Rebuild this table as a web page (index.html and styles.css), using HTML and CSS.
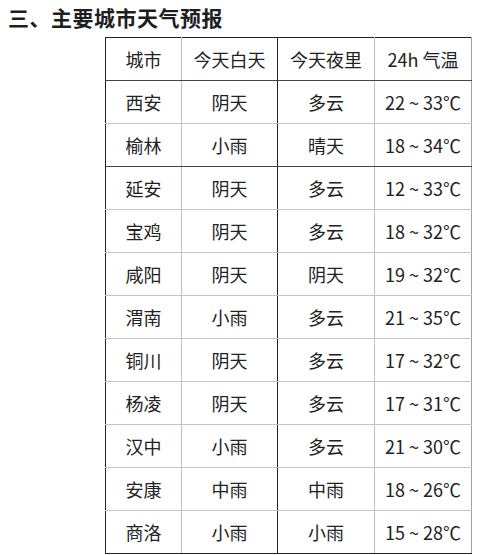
FILE: index.html
```html
<!DOCTYPE html>
<html lang="zh">
<head>
<meta charset="utf-8">
<link rel="stylesheet" href="styles.css">
</head>
<body>
<h1 class="title">三、主要城市天气预报</h1>
<table class="weather">
  <colgroup>
    <col class="c1"><col class="c2"><col class="c3"><col class="c4">
  </colgroup>
  <tr class="head dark-bottom"><td>城市</td><td class="lt">今天白天</td><td class="dk">今天夜里</td><td class="lt">24h 气温</td></tr>
  <tr><td>西安</td><td class="lt">阴天</td><td class="dk">多云</td><td class="lt">22 ~ 33℃</td></tr>
  <tr class="dark-bottom"><td>榆林</td><td class="lt">小雨</td><td class="dk">晴天</td><td class="lt">18 ~ 34℃</td></tr>
  <tr><td>延安</td><td class="lt">阴天</td><td class="dk">多云</td><td class="lt">12 ~ 33℃</td></tr>
  <tr><td>宝鸡</td><td class="lt">阴天</td><td class="dk">多云</td><td class="lt">18 ~ 32℃</td></tr>
  <tr><td>咸阳</td><td class="lt">阴天</td><td class="dk">阴天</td><td class="lt">19 ~ 32℃</td></tr>
  <tr><td>渭南</td><td class="lt">小雨</td><td class="dk">多云</td><td class="lt">21 ~ 35℃</td></tr>
  <tr><td>铜川</td><td class="lt">阴天</td><td class="dk">多云</td><td class="lt">17 ~ 32℃</td></tr>
  <tr><td>杨凌</td><td class="lt">阴天</td><td class="dk">多云</td><td class="lt">17 ~ 31℃</td></tr>
  <tr><td>汉中</td><td class="lt">小雨</td><td class="dk">多云</td><td class="lt">21 ~ 30℃</td></tr>
  <tr><td>安康</td><td class="lt">中雨</td><td class="dk">中雨</td><td class="lt">18 ~ 26℃</td></tr>
  <tr class="last"><td>商洛</td><td class="lt">小雨</td><td class="dk">小雨</td><td class="lt">15 ~ 28℃</td></tr>
</table>
</body>
</html>
```
FILE: styles.css
```css
html, body {
  margin: 0;
  padding: 0;
  background: #ffffff;
}
body {
  font-family: "Noto Sans CJK SC", "Noto Sans", sans-serif;
  color: #222222;
}
.title {
  margin: 0;
  padding: 4px 0 0 8px;
  height: 37px;
  box-sizing: border-box;
  font-size: 21px;
  line-height: 26px;
  font-weight: bold;
  color: #1e1e1e;
  letter-spacing: 0.5px;
}
.weather {
  margin-left: 105px;
  border-collapse: collapse;
  table-layout: fixed;
  border-top: 1px solid #222;
  border-left: 1px solid #222;
  border-right: 1px solid #a0a0a0;
  border-bottom: 1px solid #222;
}
.c1 { width: 76px; }
.c2 { width: 96px; }
.c3 { width: 97px; }
.c4 { width: 97px; }
.weather td {
  height: 42px;
  padding: 0;
  text-align: center;
  vertical-align: middle;
  font-size: 18px;
  line-height: 22px;
  border-bottom: 1px solid #c4c4c4;
  white-space: nowrap;
}
.weather td.lt { border-left: 1px solid #c0c0c0; }
.weather td.dk { border-left: 1px solid #222; }
.weather tr.dark-bottom td { border-bottom: 1px solid #444; }
.weather tr.last td { border-bottom: 1px solid #222; }
```
